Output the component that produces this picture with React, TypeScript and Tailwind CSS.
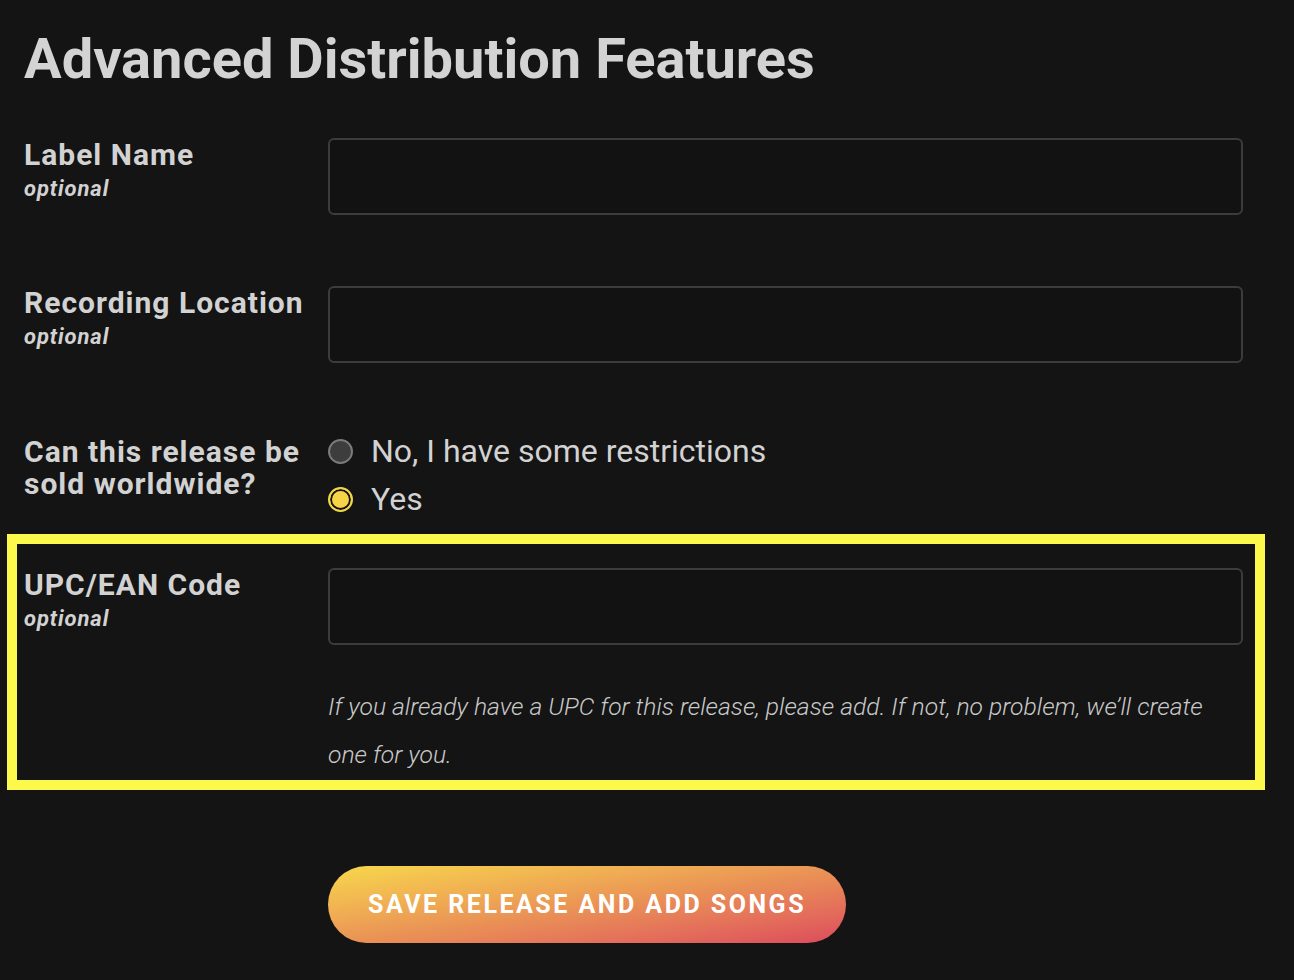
const Field = ({ label, optional = true }: { label: string; optional?: boolean }) => (
  <div className="pt-[1px]">
    <div className="text-[30px] leading-[32px] font-bold tracking-[1px] text-[#d2d2d2]">{label}</div>
    {optional && (
      <div className="mt-[4px] text-[22px] leading-[28px] font-bold italic tracking-[0.9px] text-[#d2d2d2]">optional</div>
    )}
  </div>
);

const TextInput = () => (
  <input
    type="text"
    className="block w-full h-[77px] rounded-[6px] border-2 border-[#3c3c3c] bg-[#121212] px-4 text-[24px] text-[#d2d2d2] outline-none"
  />
);

const Radio = ({ checked, label }: { checked?: boolean; label: string }) => (
  <label className="flex items-center h-[48px] gap-[18px] cursor-pointer">
    {checked ? (
      <span className="w-[25px] h-[25px] rounded-full border-2 border-[#f5d547] bg-[#f5d547] shadow-[inset_0_0_0_2px_#141414]" />
    ) : (
      <span className="w-[25px] h-[25px] rounded-full border-2 border-[#7b7b7b] bg-[#3d3d3d]" />
    )}
    <span className="text-[32px] text-[#d2d2d2]">{label}</span>
  </label>
);

export default function App() {
  return (
    <div className="min-h-[980px] bg-[#141414] px-6 pt-6 font-['Roboto',sans-serif]">
      <h1 className="text-[56px] leading-[70px] font-bold text-[#d3d3d3]">Advanced Distribution Features</h1>

      <div className="w-[1219px]">
        <div className="mt-[44px] grid grid-cols-[304px_915px]">
          <Field label="Label Name" />
          <TextInput />
        </div>

        <div className="mt-[71px] grid grid-cols-[304px_915px]">
          <Field label="Recording Location" />
          <TextInput />
        </div>

        <div className="mt-[64px] grid grid-cols-[304px_915px]">
          <div className="pt-[9px] text-[30px] leading-[32px] font-bold tracking-[1px] text-[#d2d2d2]">
            Can this release be sold worldwide?
          </div>
          <div className="flex flex-col">
            <Radio label="No, I have some restrictions" />
            <Radio checked label="Yes" />
          </div>
        </div>

        <div className="mt-[11px] -ml-[17px] -mr-[22px] border-[10px] border-[#fdf84c] pl-[7px] pr-[12px] pt-[24px] pb-[1px]">
          <div className="grid grid-cols-[304px_915px]">
            <Field label="UPC/EAN Code" />
            <div>
              <TextInput />
              <p className="mt-[38px] max-w-[890px] text-[24.7px] leading-[48px] font-light italic text-[#c9c9c9]">
                If you already have a UPC for this release, please add. If not, no problem, we’ll create one for you.
              </p>
            </div>
          </div>
        </div>

        <div className="mt-[76px] grid grid-cols-[304px_915px]">
          <div />
          <div>
            <button className="h-[77px] rounded-full bg-gradient-to-br from-[#f7d84a] via-[#ea9455] to-[#dc4a5c] px-[40px] text-[25px] font-bold tracking-[0.1em] text-white">
              SAVE RELEASE AND ADD SONGS
            </button>
          </div>
        </div>
      </div>
    </div>
  );
}
